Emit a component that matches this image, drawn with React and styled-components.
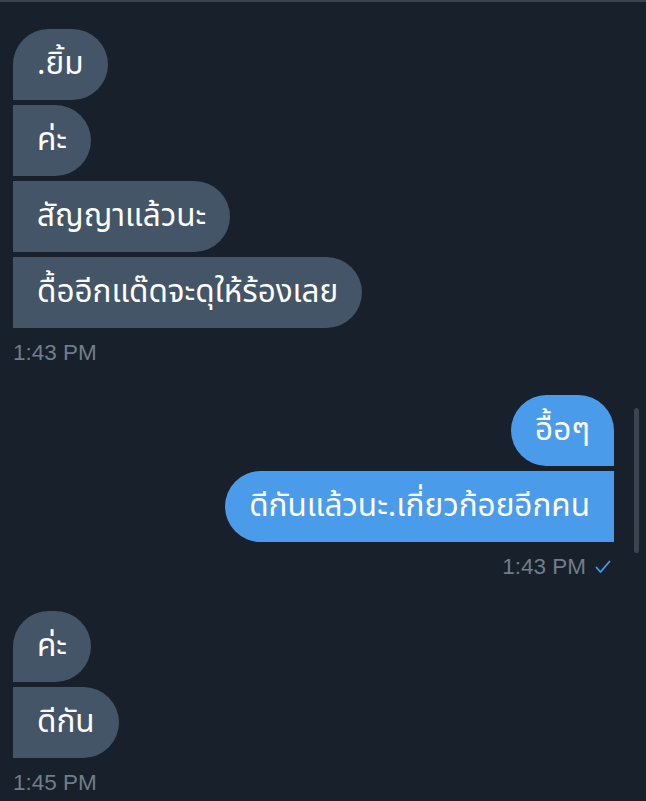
import React from "react";
import styled, { createGlobalStyle } from "styled-components";

const Global = createGlobalStyle`
  html, body { margin: 0; padding: 0; background: #18202b; }
  body { width: 646px; height: 801px; overflow: hidden; }
`;

const Screen = styled.div`
  position: relative;
  width: 646px;
  height: 801px;
  box-sizing: border-box;
  background: #18202b;
  border-top: 2px solid #3a424e;
  padding: 27px 32px 0 13px;
  display: flex;
  flex-direction: column;
`;

const Group = styled.div`
  display: flex;
  flex-direction: column;
  align-items: ${(p) => (p.$mine ? "flex-end" : "flex-start")};
  gap: 5px;
  margin-top: ${(p) => p.$top || 0}px;
`;

const radius = (mine, first) => {
  if (mine) return first ? "36px 36px 0 36px" : "36px 0 0 36px";
  return first ? "36px 36px 36px 0" : "0 36px 36px 0";
};

const Bubble = styled.div`
  box-sizing: border-box;
  height: 71px;
  padding: 0 24px;
  display: flex;
  align-items: center;
  border-radius: ${(p) => radius(p.$mine, p.$first)};
  background: ${(p) => (p.$mine ? "#4a9cea" : "#435566")};
  color: #ffffff;
  font-family: "Noto Sans Thai", "Noto Sans", "DejaVu Sans", sans-serif;
  font-size: 31.5px;
  white-space: nowrap;
`;

const Time = styled.div`
  display: flex;
  align-items: center;
  justify-content: ${(p) => (p.$mine ? "flex-end" : "flex-start")};
  gap: 9px;
  margin-top: 12px;
  padding-right: ${(p) => (p.$mine ? 3 : 0)}px;
  font-family: "Liberation Sans", Arial, sans-serif;
  font-size: 22.5px;
  line-height: 26px;
  color: #717d8a;
`;

const Scrollbar = styled.div`
  position: absolute;
  left: 634px;
  top: 406px;
  width: 5px;
  height: 145px;
  border-radius: 3px;
  background: #3b4450;
`;

const Check = () => (
  <svg width="16" height="14" viewBox="0 0 16 14" fill="none">
    <polyline points="1.5,7.5 5.5,12 14.5,1.5" stroke="#4a9cea" strokeWidth="1.8" strokeLinecap="round" strokeLinejoin="round" />
  </svg>
);

const groups = [
  { mine: false, top: 0, msgs: [".ยิ้ม", "ค่ะ", "สัญญาแล้วนะ", "ดื้ออีกแด๊ดจะดุให้ร้องเลย"], time: "1:43 PM" },
  { mine: true, top: 29, msgs: ["อื้อๆ", "ดีกันแล้วนะ.เกี่ยวก้อยอีกคน"], time: "1:43 PM" },
  { mine: false, top: 31, msgs: ["ค่ะ", "ดีกัน"], time: "1:45 PM" },
];

export default function App() {
  return (
    <>
      <Global />
      <Screen>
        {groups.map((g, i) => (
          <React.Fragment key={i}>
            <Group $mine={g.mine} $top={g.top}>
              {g.msgs.map((m, j) => (
                <Bubble key={j} $mine={g.mine} $first={j === 0}>
                  {m}
                </Bubble>
              ))}
            </Group>
            <Time $mine={g.mine}>
              <span>{g.time}</span>
              {g.mine && <Check />}
            </Time>
          </React.Fragment>
        ))}
        <Scrollbar />
      </Screen>
    </>
  );
}
